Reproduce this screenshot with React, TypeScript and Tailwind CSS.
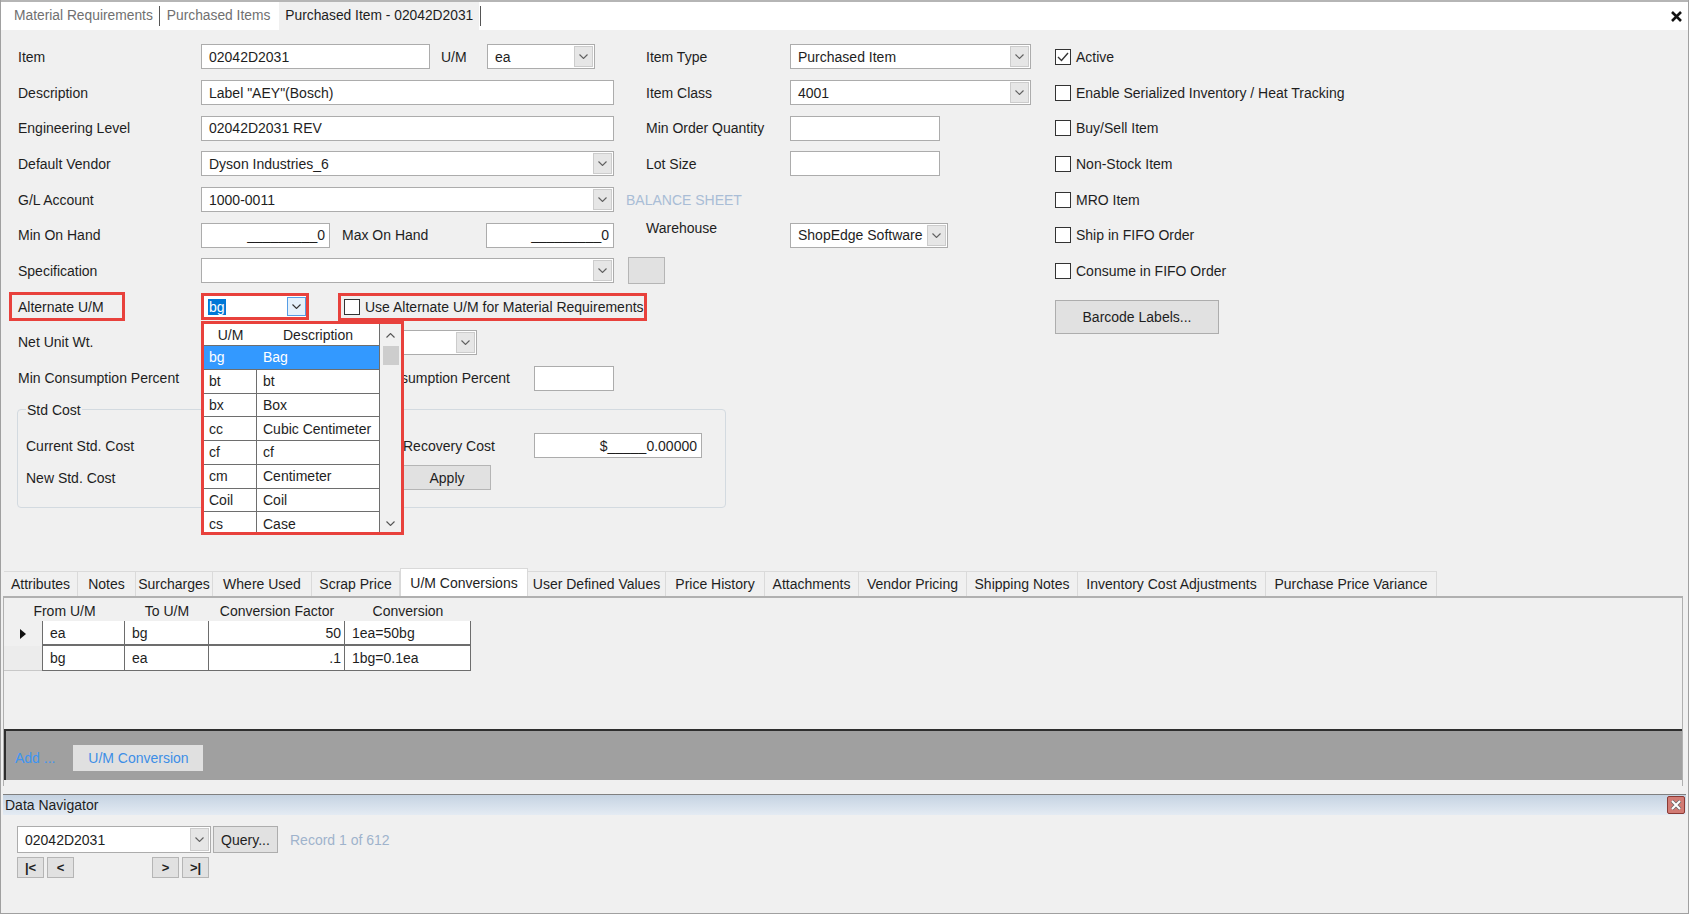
import React from "react";

function Chev({ up = false, color = "#606060" }: { up?: boolean; color?: string }) {
  return (
    <svg width="9" height="5" viewBox="0 0 9 5" className="block">
      <polyline
        points={up ? "0.5,4.5 4.5,0.5 8.5,4.5" : "0.5,0.5 4.5,4.5 8.5,0.5"}
        fill="none"
        stroke={color}
        strokeWidth="1.1"
      />
    </svg>
  );
}

function Combo({ className = "", value = "" }: { className?: string; value?: React.ReactNode }) {
  return (
    <div className={`flex h-[25px] shrink-0 items-center border border-[#acacac] bg-white ${className}`}>
      <div className="flex-1 overflow-hidden whitespace-nowrap pl-[7px]">{value}</div>
      <div className="mr-[1px] flex h-[21px] w-[19px] shrink-0 items-center justify-center border border-[#cccccc] bg-[#e6e6e6]">
        <Chev />
      </div>
    </div>
  );
}

function TextBox({ className = "", value = "", right = false }: { className?: string; value?: string; right?: boolean }) {
  return (
    <div
      className={`flex h-[25px] shrink-0 items-center whitespace-nowrap border border-[#acacac] bg-white ${
        right ? "justify-end pr-[4px]" : "pl-[7px]"
      } ${className}`}
    >
      {value}
    </div>
  );
}

function Check({ checked = false, label }: { checked?: boolean; label: string }) {
  return (
    <div className="flex items-center gap-[5px] whitespace-nowrap">
      <div className="flex h-[16px] w-[16px] shrink-0 items-center justify-center border border-[#333333] bg-white">
        {checked && (
          <svg width="12" height="10" viewBox="0 0 12 10">
            <polyline points="1,5 4.5,8.5 11,1" fill="none" stroke="#333" strokeWidth="1.4" />
          </svg>
        )}
      </div>
      <span>{label}</span>
    </div>
  );
}

function Row({ children }: { children?: React.ReactNode }) {
  return <div className="flex h-[35.7px] items-center">{children}</div>;
}

function Left({ children }: { children?: React.ReactNode }) {
  return <div className="flex w-[628px] shrink-0 items-center">{children}</div>;
}

function Mid({ children }: { children?: React.ReactNode }) {
  return <div className="flex items-center">{children}</div>;
}

function Lbl({ children }: { children?: React.ReactNode }) {
  return <div className="w-[183px] shrink-0 whitespace-nowrap">{children}</div>;
}

function MLbl({ children, className = "" }: { children?: React.ReactNode; className?: string }) {
  return <div className={`w-[144px] shrink-0 whitespace-nowrap ${className}`}>{children}</div>;
}

const listRows = [
  ["bg", "Bag"],
  ["bt", "bt"],
  ["bx", "Box"],
  ["cc", "Cubic Centimeter"],
  ["cf", "cf"],
  ["cm", "Centimeter"],
  ["Coil", "Coil"],
  ["cs", "Case"],
];

const tabs: [string, string][] = [
  ["Attributes", "w-[74px]"],
  ["Notes", "w-[58px]"],
  ["Surcharges", "w-[77px]"],
  ["Where Used", "w-[99px]"],
  ["Scrap Price", "w-[88px]"],
  ["U/M Conversions", "w-[128px]"],
  ["User Defined Values", "w-[138px]"],
  ["Price History", "w-[99px]"],
  ["Attachments", "w-[94px]"],
  ["Vendor Pricing", "w-[108px]"],
  ["Shipping Notes", "w-[111px]"],
  ["Inventory Cost Adjustments", "w-[188px]"],
  ["Purchase Price Variance", "w-[171px]"],
];

function NavBtn({ children }: { children: React.ReactNode }) {
  return (
    <div className="flex h-[21px] w-[27px] items-center justify-center border border-[#b5b5b5] bg-[#e1e1e1] text-[13px] font-bold leading-none text-[#222]">
      {children}
    </div>
  );
}

export default function App() {
  return (
    <div className="relative h-[914px] w-[1689px] overflow-hidden border-b border-l border-r border-[#a0a0a0] bg-[#f0f0f0] font-['Liberation_Sans',Arial,sans-serif] text-[14px] leading-[16px] text-[#1e1e1e]">
      {/* top document tabs */}
      <div className="flex h-[30px] items-center border-t-2 border-[#b5b5b5] bg-white text-[13.8px]">
        <span className="ml-[13px] whitespace-nowrap text-[#707070]">Material Requirements</span>
        <span className="ml-[6px] h-[20px] w-px bg-[#555]" />
        <span className="ml-[7px] whitespace-nowrap text-[#707070]">Purchased Items</span>
        <div className="ml-[9px] flex h-full items-center whitespace-nowrap bg-[#f0f0f0] px-[6px]">
          Purchased Item - 02042D2031
        </div>
        <span className="ml-[1px] h-[20px] w-px bg-[#555]" />
        <svg className="ml-auto mr-[6px]" width="11" height="11" viewBox="0 0 11 11">
          <path d="M1 1 L10 10 M10 1 L1 10" stroke="#111" strokeWidth="2.6" />
        </svg>
      </div>

      {/* form area */}
      <div className="flex h-[538px] pt-[9px]">
        <div className="w-[1054px] shrink-0 pl-[17px]">
          <Row>
            <Left>
              <Lbl>Item</Lbl>
              <TextBox className="w-[229px]" value="02042D2031" />
              <div className="ml-[11px] w-[46px] shrink-0">U/M</div>
              <Combo className="w-[108px]" value="ea" />
            </Left>
            <Mid>
              <MLbl>Item Type</MLbl>
              <Combo className="w-[241px]" value="Purchased Item" />
            </Mid>
          </Row>
          <Row>
            <Left>
              <Lbl>Description</Lbl>
              <TextBox className="w-[413px]" value={'Label "AEY"(Bosch)'} />
            </Left>
            <Mid>
              <MLbl>Item Class</MLbl>
              <Combo className="w-[241px]" value="4001" />
            </Mid>
          </Row>
          <Row>
            <Left>
              <Lbl>Engineering Level</Lbl>
              <TextBox className="w-[413px]" value="02042D2031 REV" />
            </Left>
            <Mid>
              <MLbl>Min Order Quantity</MLbl>
              <TextBox className="w-[150px]" />
            </Mid>
          </Row>
          <Row>
            <Left>
              <Lbl>Default Vendor</Lbl>
              <Combo className="w-[413px]" value="Dyson Industries_6" />
            </Left>
            <Mid>
              <MLbl>Lot Size</MLbl>
              <TextBox className="w-[150px]" />
            </Mid>
          </Row>
          <Row>
            <Left>
              <Lbl>G/L Account</Lbl>
              <Combo className="w-[413px]" value="1000-0011" />
              <span className="ml-[12px] shrink-0 whitespace-nowrap text-[#a9bdd6]">BALANCE SHEET</span>
            </Left>
          </Row>
          <Row>
            <Left>
              <Lbl>Min On Hand</Lbl>
              <TextBox className="w-[129px]" right value="_________0" />
              <div className="ml-[12px] w-[144px] shrink-0 whitespace-nowrap">Max On Hand</div>
              <TextBox className="w-[128px]" right value="_________0" />
            </Left>
            <Mid>
              <MLbl className="mb-[14px]">Warehouse</MLbl>
              <Combo className="w-[158px]" value="ShopEdge Software" />
            </Mid>
          </Row>
          <Row>
            <Left>
              <Lbl>Specification</Lbl>
              <Combo className="w-[413px]" value="" />
              <div className="ml-[14px] h-[27px] w-[37px] shrink-0 border border-[#b5b5b5] bg-[#e1e1e1]" />
            </Left>
          </Row>
          <Row>
            <Left>
              <div className="-ml-[9px] flex h-[29px] w-[116px] shrink-0 items-center whitespace-nowrap border-[3px] border-[#e8413c] pl-[6px]">
                Alternate U/M
              </div>
              <div className="ml-[76px] flex h-[27px] w-[108px] shrink-0 items-center border-[3px] border-[#e8413c] bg-white">
                <div className="flex-1 pl-[4px]">
                  <span className="bg-[#0078d7] px-[1px] text-white">bg</span>
                </div>
                <div className="flex h-[19px] w-[19px] items-center justify-center border border-[#569de5] bg-[#e5f1fb]">
                  <Chev color="#333" />
                </div>
              </div>
              <div className="ml-[29px] flex h-[28px] w-[309px] shrink-0 items-center border-[3px] border-[#e8413c] pl-[3px]">
                <Check label="Use Alternate U/M for Material Requirements" />
              </div>
            </Left>
          </Row>
          <Row>
            <Left>
              <Lbl>Net Unit Wt.</Lbl>
              <Combo className="ml-[182px] w-[94px]" value="" />
            </Left>
          </Row>
          <Row>
            <Left>
              <Lbl>Min Consumption Percent</Lbl>
              <div className="ml-[144px] w-[189px] shrink-0 whitespace-nowrap">Max Consumption Percent</div>
              <TextBox className="w-[80px]" />
            </Left>
          </Row>

          <fieldset className="-ml-[1px] mt-[6px] h-[106px] w-[709px] rounded-[4px] border border-[#d3dae0]">
            <legend className="ml-[8px] px-[1px] leading-[16px]">Std Cost</legend>
            <div className="pl-[8px] pt-[13px]">
              <div className="flex h-[30px] items-center">
                <div className="w-[377px] shrink-0 whitespace-nowrap">Current Std. Cost</div>
                <div className="w-[131px] shrink-0 whitespace-nowrap">Recovery Cost</div>
                <TextBox className="w-[168px]" right value="$_____0.00000" />
              </div>
              <div className="flex h-[34px] items-center">
                <div className="w-[377px] shrink-0 whitespace-nowrap">New Std. Cost</div>
                <div className="flex h-[25px] w-[88px] items-center justify-center border border-[#b5b5b5] bg-[#e1e1e1]">
                  Apply
                </div>
              </div>
            </div>
          </fieldset>
        </div>

        {/* right column */}
        <div className="flex flex-col">
          <Row>
            <Check checked label="Active" />
          </Row>
          <Row>
            <Check label="Enable Serialized Inventory / Heat Tracking" />
          </Row>
          <Row>
            <Check label="Buy/Sell Item" />
          </Row>
          <Row>
            <Check label="Non-Stock Item" />
          </Row>
          <Row>
            <Check label="MRO Item" />
          </Row>
          <Row>
            <Check label="Ship in FIFO Order" />
          </Row>
          <Row>
            <Check label="Consume in FIFO Order" />
          </Row>
          <div className="mt-[11px] flex h-[34px] w-[164px] items-center justify-center border border-[#adadad] bg-[#e1e1e1]">
            Barcode Labels...
          </div>
        </div>
      </div>

      {/* bottom tabs */}
      <div className="flex h-[28px] items-end pl-[3px]">
        {tabs.map(([t, w]) =>
          t === "U/M Conversions" ? (
            <div
              key={t}
              className={`flex h-[28px] shrink-0 items-center justify-center whitespace-nowrap border border-b-0 border-[#d9d9d9] bg-white ${w}`}
            >
              {t}
            </div>
          ) : (
            <div
              key={t}
              className={`flex h-[25px] shrink-0 items-center justify-center whitespace-nowrap border-r border-t border-[#dadada] bg-[#f0f0f0] ${w}`}
            >
              {t}
            </div>
          )
        )}
      </div>

      {/* tab page */}
      <div className="ml-[2px] flex h-[190px] w-[1680px] flex-col border-l border-r border-t-2 border-[#b0b0b0]">
        <div className="mt-[2px] w-[467px]">
          <div className="flex h-[21px] items-center">
            <div className="w-[121px] text-center">From U/M</div>
            <div className="w-[84px] text-center">To U/M</div>
            <div className="w-[136px] text-center">Conversion Factor</div>
            <div className="w-[126px] text-center">Conversion</div>
          </div>
          <div className="flex h-[25px]">
            <div className="flex w-[38px] items-center justify-center">
              <svg width="6" height="10" viewBox="0 0 6 10">
                <polygon points="0,0 6,5 0,10" fill="#111" />
              </svg>
            </div>
            <div className="flex w-[83px] items-center border-b-2 border-l border-r border-[#6d6d6d] bg-white pl-[7px]">ea</div>
            <div className="flex w-[84px] items-center border-b-2 border-r border-[#6d6d6d] bg-white pl-[7px]">bg</div>
            <div className="flex w-[136px] items-center justify-end border-b-2 border-r border-[#6d6d6d] bg-white pr-[3px]">50</div>
            <div className="flex w-[126px] items-center border-b-2 border-r border-[#6d6d6d] bg-white pl-[7px]">1ea=50bg</div>
          </div>
          <div className="flex h-[25px]">
            <div className="w-[38px] border-b border-[#c8c8c8] bg-[#ececec]" />
            <div className="flex w-[83px] items-center border-b border-l border-r border-[#6d6d6d] bg-white pl-[7px]">bg</div>
            <div className="flex w-[84px] items-center border-b border-r border-[#6d6d6d] bg-white pl-[7px]">ea</div>
            <div className="flex w-[136px] items-center justify-end border-b border-r border-[#6d6d6d] bg-white pr-[3px]">.1</div>
            <div className="flex w-[126px] items-center border-b border-r border-[#6d6d6d] bg-white pl-[7px]">1bg=0.1ea</div>
          </div>
        </div>
        <div className="ml-0 mt-[58px] flex h-[51px] items-center border-l-2 border-t-2 border-[#2e2e2e] bg-[#a0a0a0] pt-[5px]">
          <span className="ml-[9px] whitespace-nowrap text-[#3d95f2]">Add ...</span>
          <div className="ml-[18px] flex h-[26px] w-[130px] items-center justify-center bg-[#e0e0e0] text-[#3d8ee6]">
            U/M Conversion
          </div>
        </div>
      </div>

      <div className="h-[8px]" />

      {/* Data navigator */}
      <div className="ml-[2px] mr-[2px] flex h-[21px] items-center border-t border-[#808080] bg-gradient-to-b from-[#c5d3e2] to-[#e4ebf3]">
        <span className="ml-[2px] whitespace-nowrap">Data Navigator</span>
        <div className="ml-auto mr-[1px] flex h-[18px] w-[18px] items-center justify-center rounded-[2px] border border-[#8a3b36] bg-[#d27b74]">
          <svg width="12" height="12" viewBox="0 0 12 12">
            <path d="M2 2 L10 10 M10 2 L2 10" stroke="#6b6b6b" strokeWidth="3.6" />
            <path d="M2 2 L10 10 M10 2 L2 10" stroke="#ffffff" strokeWidth="2" />
          </svg>
        </div>
      </div>
      <div className="pl-[16px] pt-[11px]">
        <div className="flex items-center">
          <div className="flex h-[27px] w-[194px] items-center border border-[#acacac] bg-white">
            <div className="flex-1 pl-[7px]">02042D2031</div>
            <div className="mr-[1px] flex h-[23px] w-[19px] items-center justify-center border border-[#cccccc] bg-[#e6e6e6]">
              <Chev />
            </div>
          </div>
          <div className="ml-[2px] flex h-[27px] w-[65px] items-center justify-center border border-[#adadad] bg-[#e1e1e1]">
            Query...
          </div>
          <span className="ml-[12px] whitespace-nowrap text-[#9fb3cc]">Record 1 of 612</span>
        </div>
        <div className="mt-[4px] flex items-center">
          <NavBtn>|&lt;</NavBtn>
          <div className="ml-[3px]">
            <NavBtn>&lt;</NavBtn>
          </div>
          <div className="ml-[78px]">
            <NavBtn>&gt;</NavBtn>
          </div>
          <div className="ml-[3px]">
            <NavBtn>&gt;|</NavBtn>
          </div>
        </div>
      </div>

      {/* Alternate U/M dropdown list overlay */}
      <div className="absolute left-[200px] top-[321px] flex h-[214px] w-[203px] border-[3px] border-[#e8413c] bg-white">
        <div className="w-[176px] overflow-hidden border-r border-[#6e6e6e]">
          <div className="flex h-[22px] items-center border-b border-[#6e6e6e]">
            <div className="w-[53px] text-center">U/M</div>
            <div className="flex-1 text-center">Description</div>
          </div>
          {listRows.map(([u, d], i) => (
            <div
              key={u}
              className={`flex h-[23.75px] border-b border-[#6e6e6e] ${i === 0 ? "bg-[#3399ff] text-white" : ""}`}
            >
              <div className={`flex w-[53px] items-center pl-[5px] ${i === 0 ? "" : "border-r border-[#6e6e6e]"}`}>{u}</div>
              <div className="flex flex-1 items-center whitespace-nowrap pl-[6px]">{d}</div>
            </div>
          ))}
        </div>
        <div className="flex flex-1 flex-col items-center bg-[#f0f0f0]">
          <div className="flex h-[22px] items-center">
            <Chev up color="#555" />
          </div>
          <div className="h-[19px] w-[16px] bg-[#cdcdcd]" />
          <div className="mt-auto flex h-[18px] items-center">
            <Chev color="#555" />
          </div>
        </div>
      </div>
    </div>
  );
}
